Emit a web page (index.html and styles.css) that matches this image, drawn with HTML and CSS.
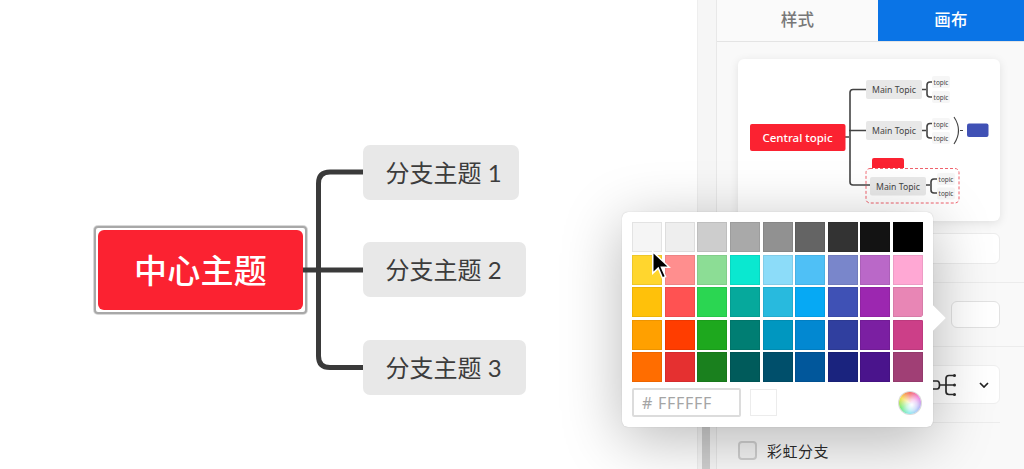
FILE: index.html
```html
<!DOCTYPE html>
<html lang="zh">
<head>
  <meta charset="utf-8">
  <title>画布</title>
  <link rel="stylesheet" href="styles.css">
</head>
<body>
  <div class="app">

    <!-- mind map canvas -->
    <main class="canvas">
      <div class="central-frame">
        <div class="central">中心主题</div>
      </div>
      <svg class="links" width="697" height="469" viewBox="0 0 697 469">
        <path d="M303 270H363M363 172H330Q318.500 172 318.500 183.500V356Q318.500 367.500 330 367.500H363"></path>
      </svg>
      <div class="branch branch-1">分支主题 1</div>
      <div class="branch branch-2">分支主题 2</div>
      <div class="branch branch-3">分支主题 3</div>
    </main>

    <div class="gutter"><div class="thumb"></div></div>

    <aside class="panel">
      <div class="tabs">
        <div class="tab">样式</div>
        <div class="tab active">画布</div>
      </div>
      <div class="panel-body">
        <div class="preview">
          <svg width="262" height="162" viewBox="738 59 262 162">
            <g class="mini-links">
              <path d="M845 137H849M866 89.500H853Q850 89.500 850 92.500V182Q850 185 853 185H870M849 130.500H866"></path>
              <path d="M922 89.500H926M932 82H930Q927 82 927 85V94Q927 97 930 97H932"></path>
              <path d="M922 130.500H926M932 123.500H930Q927 123.500 927 126.500V135Q927 138 930 138H932"></path>
              <path d="M926 185H930M937 179H934Q931 179 931 182V190Q931 193 934 193H937"></path>
            </g>
            <path class="mini-bracket" d="M954 117Q963 130.500 954 144M960 130.500H963"></path>
            <rect class="mini-central" x="750" y="124" width="95.500" height="27" rx="2"></rect>
            <text class="mini-central-text" x="797.500" y="142">Central topic</text>
            <rect class="mini-main" x="866" y="80" width="56" height="19" rx="2"></rect>
            <text class="mini-main-text" x="894" y="93">Main Topic</text>
            <rect class="mini-main" x="866" y="121" width="56" height="19" rx="2"></rect>
            <text class="mini-main-text" x="894" y="134">Main Topic</text>
            <rect class="mini-sub" x="932" y="76" width="18" height="12" rx="2"></rect>
            <text class="mini-sub-text" x="941" y="84.500">topic</text>
            <rect class="mini-sub" x="932" y="91" width="18" height="12" rx="2"></rect>
            <text class="mini-sub-text" x="941" y="99.500">topic</text>
            <rect class="mini-sub" x="932" y="118" width="18" height="12" rx="2"></rect>
            <text class="mini-sub-text" x="941" y="126.500">topic</text>
            <rect class="mini-sub" x="932" y="132" width="18" height="12" rx="2"></rect>
            <text class="mini-sub-text" x="941" y="140.500">topic</text>
            <rect class="mini-blue" x="967" y="123.500" width="21.500" height="13.500" rx="2"></rect>
            <path class="mini-label" d="M872 168V160Q872 158 874 158H902Q904 158 904 160V168Z"></path>
            <rect class="mini-dash" x="866" y="168.500" width="93" height="34.500" rx="4"></rect>
            <rect class="mini-main" x="870" y="177" width="56" height="18.500" rx="2"></rect>
            <text class="mini-main-text" x="898" y="190">Main Topic</text>
            <rect class="mini-sub" x="937" y="173" width="18" height="12" rx="2"></rect>
            <text class="mini-sub-text" x="946" y="181.500">topic</text>
            <rect class="mini-sub" x="937" y="187.500" width="18" height="12" rx="2"></rect>
            <text class="mini-sub-text" x="946" y="196">topic</text>
          </svg>
        </div>
        <div class="field"></div>
        <div class="rule"></div>
        <div class="color-row"><div class="color-btn"></div></div>
        <div class="rule"></div>
        <div class="select">
          <svg class="tree-icon" width="26" height="22" viewBox="0 0 26 22">
            <path d="M0 7H6Q8.500 7 8.500 11Q8.500 15 6 15H0M8.500 11H15M23 1.500H18Q15 1.500 15 4.500V17.500Q15 20.500 18 20.500H23M15 11H23"></path>
            <circle cx="23.500" cy="1.500" r="1.500"></circle>
            <circle cx="23.500" cy="11" r="1.500"></circle>
            <circle cx="23.500" cy="20.500" r="1.500"></circle>
          </svg>
          <svg class="chevron" width="10" height="6" viewBox="0 0 10 6">
            <path d="M1 1L5 5L9 1"></path>
          </svg>
        </div>
        <div class="rule rule-short"></div>
        <label class="check-row">
          <span class="checkbox"></span>
          <span class="check-label">彩虹分支</span>
        </label>
      </div>
    </aside>
  </div>

  <!-- colour picker popover -->
  <div class="popover">
    <div class="palette">
      <i></i><i></i><i></i><i></i><i></i><i></i><i></i><i></i><i></i>
      <i></i><i></i><i></i><i></i><i></i><i></i><i></i><i></i><i></i>
      <i></i><i></i><i></i><i></i><i></i><i></i><i></i><i></i><i></i>
      <i></i><i></i><i></i><i></i><i></i><i></i><i></i><i></i><i></i>
      <i></i><i></i><i></i><i></i><i></i><i></i><i></i><i></i><i></i>
    </div>
    <div class="picker-foot">
      <div class="hex">#&nbsp;FFFFFF</div>
      <div class="current"></div>
      <div class="wheel"></div>
    </div>
  </div>

  <svg class="cursor" width="24" height="34" viewBox="0 0 24 34">
    <path class="cursor-edge" d="M2 1V26L8 20.500L12 30L16.500 28L12.500 19H21Z"></path>
    <path d="M3.500 4.500V22.500L8.500 17.800L12.800 28L14.600 27.200L10.300 17.500H17.500Z"></path>
  </svg>
</body>
</html>
```

FILE: styles.css
```css
* { box-sizing: border-box; }

html, body {
  margin: 0;
  height: 100%;
  overflow: hidden;
}

body {
  position: relative;
  font-family: "Noto Sans CJK SC", "Noto Sans", sans-serif;
  color: #333;
  background: #fff;
}

.app {
  display: flex;
  width: 1024px;
  height: 469px;
}

/* canvas */
.canvas {
  position: relative;
  width: 697px;
  flex: none;
  background: #fff;
}

.links {
  position: absolute;
  left: 0;
  top: 0;
}

.links path {
  fill: none;
  stroke: #3a3a3a;
  stroke-width: 5;
}

.central-frame {
  position: absolute;
  left: 94px;
  top: 226px;
  width: 213px;
  height: 88px;
  padding: 2px;
  background: #fff;
  border: 2px solid #a8a8a8;
  border-radius: 4px;
  box-shadow: 0 0 0 1px rgba(168, 168, 168, .45);
}

.central {
  display: flex;
  align-items: center;
  justify-content: center;
  height: 100%;
  padding-bottom: 3px;
  color: #fff;
  font-size: 33px;
  font-weight: 500;
  letter-spacing: .3px;
  background: #fb2231;
  border-radius: 6px;
}

.branch {
  position: absolute;
  left: 363px;
  height: 55px;
  display: flex;
  align-items: center;
  padding-left: 22.500px;
  padding-bottom: 2px;
  font-family: Lato, "Noto Sans CJK SC", sans-serif;
  font-size: 24px;
  white-space: pre;
  color: #3c3c3c;
  background: #e8e8e8;
  border-radius: 7px;
}

.branch-1 { top: 145px; width: 156px; }
.branch-2 { top: 242px; width: 163px; }
.branch-3 { top: 340px; width: 163px; }

/* strip between canvas and panel */
.gutter {
  position: relative;
  width: 19px;
  flex: none;
  background: #f6f6f6;
  border-left: 1px solid #eee;
}

.thumb {
  position: absolute;
  left: 4px;
  top: 380px;
  bottom: 0;
  width: 8px;
  background: #cfcfcf;
}

/* right panel */
.panel {
  flex: 1;
  background: #f9f9f9;
  border-left: 1px solid #e8e8e8;
}

.tabs {
  display: flex;
  height: 42px;
  border-bottom: 1px solid #e4e4e4;
  background: #fafafa;
}

.tab {
  flex: 1;
  display: flex;
  align-items: center;
  justify-content: center;
  height: 41px;
  padding-bottom: 3px;
  font-size: 16.500px;
  font-weight: 500;
  letter-spacing: .3px;
  color: #777;
}

.tab.active {
  flex: none;
  width: 146px;
  color: #fff;
  background: #0a74e6;
}

.panel-body {
  padding: 17px 24px 0 21px;
}

.preview {
  height: 162px;
  background: #fff;
  border-radius: 6px;
  box-shadow: 0 2px 10px rgba(0, 0, 0, .1);
}

.preview svg { display: block; }

.mini-links path,
.mini-bracket {
  fill: none;
  stroke: #444;
}

.mini-links path { stroke-width: 1.600; }
.mini-bracket { stroke-width: 1.100; }

.mini-central { fill: #fb2231; }
.mini-main { fill: #e8e8e8; }
.mini-sub { fill: #f6f6f6; }
.mini-blue { fill: #4051b5; }
.mini-label { fill: #fb2231; }

.mini-dash {
  fill: none;
  stroke: #f0616c;
  stroke-width: 1;
  stroke-dasharray: 3 2;
}

.preview text {
  text-anchor: middle;
  font-family: "Noto Sans", sans-serif;
}

.mini-central-text {
  fill: #fff;
  font-size: 11.500px;
  font-weight: 500;
}

.mini-main-text {
  fill: #444;
  font-size: 8.700px;
}

.mini-sub-text {
  fill: #444;
  font-size: 6.400px;
}

.field {
  height: 31px;
  margin-top: 12px;
  background: #fff;
  border: 1px solid #ececec;
  border-radius: 6px;
}

.rule {
  height: 1px;
  margin: 18px -24px 0 -21px;
  background: #ececec;
}

.rule-short {
  margin-right: 0;
  margin-left: 0;
}

.color-row {
  display: flex;
  justify-content: flex-end;
  padding-top: 18px;
}

.color-btn {
  width: 49px;
  height: 27px;
  background: #fff;
  border: 1px solid #e2e2e2;
  border-radius: 6px;
}

.select {
  display: flex;
  align-items: center;
  justify-content: flex-end;
  height: 39px;
  margin-top: 18px;
  padding-right: 10px;
  background: #fff;
  border: 1px solid #efefef;
  border-radius: 6px;
}

.tree-icon {
  margin-right: 22px;
}

.tree-icon path {
  fill: none;
  stroke: #2c2c2c;
  stroke-width: 1.700;
}

.tree-icon circle { fill: #2c2c2c; }

.chevron path {
  fill: none;
  stroke: #222;
  stroke-width: 1.700;
}

.check-row {
  display: flex;
  align-items: center;
  gap: 10px;
  margin-top: 17px;
}

.checkbox {
  width: 19px;
  height: 19px;
  background: #f4f4f4;
  border: 2px solid #d0d0d0;
  border-radius: 4px;
}

.check-label {
  font-size: 15px;
  letter-spacing: .5px;
  color: #2c2c2c;
}

/* colour picker */
.popover {
  position: absolute;
  left: 622px;
  top: 212px;
  width: 311px;
  height: 215px;
  padding: 10px;
  background: #fff;
  border-radius: 6px;
  box-shadow: 0 0 1px rgba(0, 0, 0, .25), 0 12px 60px rgba(0, 0, 0, .28);
}

.popover::after {
  content: "";
  position: absolute;
  left: 302px;
  top: 97px;
  width: 18px;
  height: 18px;
  background: #fff;
  transform: rotate(45deg);
}

.palette {
  display: grid;
  grid-template-columns: repeat(9, 30px);
  grid-auto-rows: 30px;
  gap: 2.500px 2.625px;
}

.palette i {
  display: block;
  box-shadow: inset 0 0 0 1px rgba(0, 0, 0, .07);
}

.palette i:nth-child(1) { background: #f5f5f5; }
.palette i:nth-child(2) { background: #eeeeee; }
.palette i:nth-child(3) { background: #cdcdcd; }
.palette i:nth-child(4) { background: #a9a9a9; }
.palette i:nth-child(5) { background: #919191; }
.palette i:nth-child(6) { background: #646464; }
.palette i:nth-child(7) { background: #333333; }
.palette i:nth-child(8) { background: #131313; }
.palette i:nth-child(9) { background: #000000; }
.palette i:nth-child(10) { background: #ffd62e; }
.palette i:nth-child(11) { background: #ff8e8e; }
.palette i:nth-child(12) { background: #8cdd95; }
.palette i:nth-child(13) { background: #0ae8d0; }
.palette i:nth-child(14) { background: #8cdcf9; }
.palette i:nth-child(15) { background: #4fc0f6; }
.palette i:nth-child(16) { background: #7986cb; }
.palette i:nth-child(17) { background: #ba68c8; }
.palette i:nth-child(18) { background: #ffa8d4; }
.palette i:nth-child(19) { background: #ffc10a; }
.palette i:nth-child(20) { background: #ff5252; }
.palette i:nth-child(21) { background: #2bd652; }
.palette i:nth-child(22) { background: #06a99c; }
.palette i:nth-child(23) { background: #28bade; }
.palette i:nth-child(24) { background: #06a9f4; }
.palette i:nth-child(25) { background: #3f51b5; }
.palette i:nth-child(26) { background: #9c27b0; }
.palette i:nth-child(27) { background: #e886b5; }
.palette i:nth-child(28) { background: #ffa000; }
.palette i:nth-child(29) { background: #ff3d00; }
.palette i:nth-child(30) { background: #1ea81e; }
.palette i:nth-child(31) { background: #007e73; }
.palette i:nth-child(32) { background: #0097c0; }
.palette i:nth-child(33) { background: #0288d1; }
.palette i:nth-child(34) { background: #303f9f; }
.palette i:nth-child(35) { background: #7b1fa2; }
.palette i:nth-child(36) { background: #cc3f88; }
.palette i:nth-child(37) { background: #ff6d00; }
.palette i:nth-child(38) { background: #e53030; }
.palette i:nth-child(39) { background: #1a801e; }
.palette i:nth-child(40) { background: #005b5b; }
.palette i:nth-child(41) { background: #004f6b; }
.palette i:nth-child(42) { background: #01579b; }
.palette i:nth-child(43) { background: #1a237e; }
.palette i:nth-child(44) { background: #4a148c; }
.palette i:nth-child(45) { background: #a03f75; }

.picker-foot {
  display: flex;
  align-items: center;
  margin-top: 6px;
}

.hex {
  display: flex;
  align-items: center;
  width: 109px;
  height: 29px;
  padding-left: 8px;
  font-family: "Noto Sans", sans-serif;
  font-size: 16px;
  letter-spacing: .7px;
  color: #a5a5a5;
  border: 2px solid #dcdcdc;
  border-radius: 2px;
}

.current {
  width: 27px;
  height: 27px;
  margin-left: 9px;
  background: #fff;
  border: 1px solid #ececec;
}

.wheel {
  width: 22px;
  height: 22px;
  margin-left: auto;
  margin-right: 2px;
  border-radius: 50%;
  background:
    radial-gradient(circle at 58% 58%, #fff 0, rgba(255, 255, 255, .7) 30%, rgba(255, 255, 255, 0) 72%),
    conic-gradient(#f4655f, #e85fd8, #6f7ff0, #4fdde8, #62e86a, #f6e04f, #f4655f);
  box-shadow: 0 0 0 1px rgba(0, 0, 0, .15);
}

/* mouse pointer */
.cursor {
  position: absolute;
  left: 650px;
  top: 249px;
}

.cursor-edge { fill: #fff; }
```
